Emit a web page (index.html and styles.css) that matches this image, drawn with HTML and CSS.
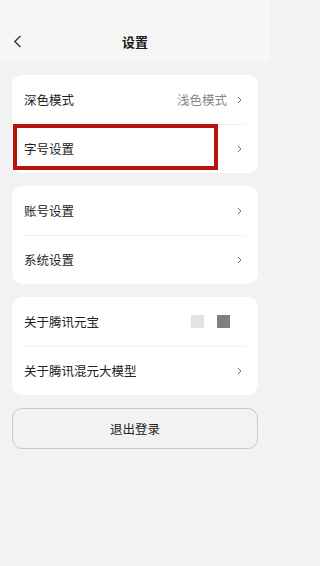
FILE: index.html
```html
<!DOCTYPE html>
<html lang="zh-CN">
<head>
<meta charset="utf-8">
<title>设置</title>
<link rel="stylesheet" href="styles.css">
</head>
<body>
<div class="page">
  <header class="topbar">
    <span class="back">
      <svg width="9" height="13" viewBox="0 0 9 13"><path d="M7.5 1 L1.8 6.5 L7.5 12" fill="none" stroke="#333" stroke-width="1.3"/></svg>
    </span>
    <h1 class="title">设置</h1>
  </header>
  <main class="content">
    <section class="card">
      <div class="row">
        <span class="label">深色模式</span>
        <span class="right"><span class="value">浅色模式</span><svg class="chev" width="5" height="8" viewBox="0 0 5 8"><path d="M1 1 L4 4 L1 7" fill="none" stroke="#777" stroke-width="1"/></svg></span>
      </div>
      <div class="row divided">
        <span class="label">字号设置</span>
        <span class="right"><svg class="chev" width="5" height="8" viewBox="0 0 5 8"><path d="M1 1 L4 4 L1 7" fill="none" stroke="#777" stroke-width="1"/></svg></span>
      </div>
      <div class="highlight"></div>
    </section>
    <section class="card">
      <div class="row">
        <span class="label">账号设置</span>
        <span class="right"><svg class="chev" width="5" height="8" viewBox="0 0 5 8"><path d="M1 1 L4 4 L1 7" fill="none" stroke="#777" stroke-width="1"/></svg></span>
      </div>
      <div class="row divided">
        <span class="label">系统设置</span>
        <span class="right"><svg class="chev" width="5" height="8" viewBox="0 0 5 8"><path d="M1 1 L4 4 L1 7" fill="none" stroke="#777" stroke-width="1"/></svg></span>
      </div>
    </section>
    <section class="card">
      <div class="row">
        <span class="label">关于腾讯元宝</span>
        <span class="squares"><span class="sq light"></span><span class="sq dark"></span></span>
      </div>
      <div class="row divided">
        <span class="label">关于腾讯混元大模型</span>
        <span class="right"><svg class="chev" width="5" height="8" viewBox="0 0 5 8"><path d="M1 1 L4 4 L1 7" fill="none" stroke="#777" stroke-width="1"/></svg></span>
      </div>
    </section>
    <button class="logout">退出登录</button>
  </main>
</div>
</body>
</html>
```

FILE: styles.css
```css
* { box-sizing: border-box; }
html, body { margin: 0; padding: 0; }
body {
  background: #f2f2f2;
  font-family: "Noto Sans CJK SC", "Noto Sans", sans-serif;
  color: #222;
}
.page { width: 270px; min-height: 566px; }
.topbar {
  height: 62px;
  background: #f6f6f6;
  display: flex;
  align-items: center;
  justify-content: center;
  position: relative;
  padding-top: 22px;
}
.back {
  position: absolute;
  left: 13px;
  top: 35px;
  display: flex;
}
.title {
  margin: 0;
  font-size: 13px;
  font-weight: 700;
  line-height: 16px;
  color: #1a1a1a;
}
.content {
  padding: 13px 12px 0;
  display: flex;
  flex-direction: column;
  gap: 13px;
}
.card {
  background: #fff;
  border-radius: 10px;
  position: relative;
}
.row {
  height: 49px;
  display: flex;
  align-items: center;
  justify-content: space-between;
  padding: 0 16px 0 12px;
  position: relative;
}
.row.divided::before {
  content: "";
  position: absolute;
  left: 12px;
  right: 12px;
  top: 0;
  height: 1px;
  background: #f2f2f2;
}
.label {
  font-size: 12.5px;
  line-height: 16px;
  color: #222;
}
.right {
  display: flex;
  align-items: center;
  gap: 10px;
}
.value {
  font-size: 12.5px;
  line-height: 16px;
  color: #888;
}
.chev { display: block; }
.squares {
  display: flex;
  gap: 13px;
  margin-right: 12px;
}
.sq { width: 13px; height: 13px; display: block; }
.sq.light { background: #e3e3e3; }
.sq.dark { background: #808080; }
.highlight {
  position: absolute;
  left: 1px;
  top: 49px;
  width: 205px;
  height: 46px;
  border: 4px solid #b3150e;
  pointer-events: none;
}
.logout {
  height: 41px;
  border: 1px solid #c9c9c9;
  border-radius: 10px;
  background: #f2f2f2;
  font-family: "Noto Sans CJK SC", "Noto Sans", sans-serif;
  font-size: 12.5px;
  color: #222;
  width: 100%;
  padding: 0;
}
```
